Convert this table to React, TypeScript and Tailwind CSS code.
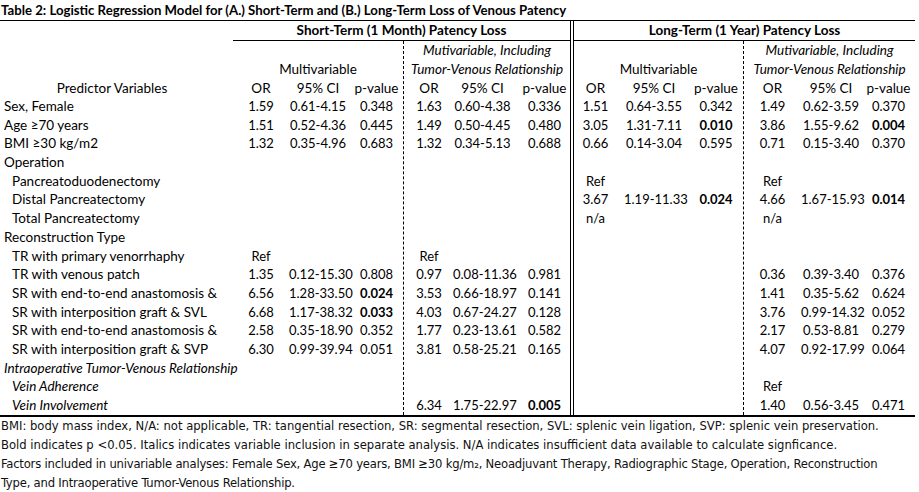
import React from 'react'

type Trio = [string, string, string] | null

interface Row {
  label: string
  level?: 0 | 1
  italic?: boolean
  g1?: Trio
  g2?: Trio
  g3?: Trio
  g4?: Trio
}

// a leading "*" marks a bold p-value
const rows: Row[] = [
  { label: 'Sex, Female', g1: ['1.59', '0.61-4.15', '0.348'], g2: ['1.63', '0.60-4.38', '0.336'], g3: ['1.51', '0.64-3.55', '0.342'], g4: ['1.49', '0.62-3.59', '0.370'] },
  { label: 'Age ≥70 years', g1: ['1.51', '0.52-4.36', '0.445'], g2: ['1.49', '0.50-4.45', '0.480'], g3: ['3.05', '1.31-7.11', '*0.010'], g4: ['3.86', '1.55-9.62', '*0.004'] },
  { label: 'BMI ≥30 kg/m2', g1: ['1.32', '0.35-4.96', '0.683'], g2: ['1.32', '0.34-5.13', '0.688'], g3: ['0.66', '0.14-3.04', '0.595'], g4: ['0.71', '0.15-3.40', '0.370'] },
  { label: 'Operation' },
  { label: 'Pancreatoduodenectomy', level: 1, g3: ['Ref', '', ''], g4: ['Ref', '', ''] },
  { label: 'Distal Pancreatectomy', level: 1, g3: ['3.67', '1.19-11.33', '*0.024'], g4: ['4.66', '1.67-15.93', '*0.014'] },
  { label: 'Total Pancreatectomy', level: 1, g3: ['n/a', '', ''], g4: ['n/a', '', ''] },
  { label: 'Reconstruction Type' },
  { label: 'TR with primary venorrhaphy', level: 1, g1: ['Ref', '', ''], g2: ['Ref', '', ''] },
  { label: 'TR with venous patch', level: 1, g1: ['1.35', '0.12-15.30', '0.808'], g2: ['0.97', '0.08-11.36', '0.981'], g4: ['0.36', '0.39-3.40', '0.376'] },
  { label: 'SR with end-to-end anastomosis &', level: 1, g1: ['6.56', '1.28-33.50', '*0.024'], g2: ['3.53', '0.66-18.97', '0.141'], g4: ['1.41', '0.35-5.62', '0.624'] },
  { label: 'SR with interposition graft & SVL', level: 1, g1: ['6.68', '1.17-38.32', '*0.033'], g2: ['4.03', '0.67-24.27', '0.128'], g4: ['3.76', '0.99-14.32', '0.052'] },
  { label: 'SR with end-to-end anastomosis &', level: 1, g1: ['2.58', '0.35-18.90', '0.352'], g2: ['1.77', '0.23-13.61', '0.582'], g4: ['2.17', '0.53-8.81', '0.279'] },
  { label: 'SR with interposition graft & SVP', level: 1, g1: ['6.30', '0.99-39.94', '0.051'], g2: ['3.81', '0.58-25.21', '0.165'], g4: ['4.07', '0.92-17.99', '0.064'] },
  { label: 'Intraoperative Tumor-Venous Relationship', italic: true },
  { label: 'Vein Adherence', level: 1, italic: true, g4: ['Ref', '', ''] },
  { label: 'Vein Involvement', level: 1, italic: true, g2: ['6.34', '1.75-22.97', '*0.005'], g4: ['1.40', '0.56-3.45', '0.471'] },
]

type Key = 'g1' | 'g2' | 'g3' | 'g4'

// column widths per sub-group: OR, 95% CI, p-value
const widths: Record<Key, [string, string, string]> = {
  g1: ['w-[56px]', 'w-[58px]', 'w-[56px] pl-[3px]'],
  g2: ['w-[49px] pl-[1px]', 'w-[59px]', 'w-[58px] pl-[7px]'],
  g3: ['w-[50px] pr-[7px]', 'w-[60px]', 'w-[59px] pl-[5px]'],
  g4: ['w-[57px]', 'w-[60px]', 'w-[54px] pl-[1px]'],
}

function Value({ text, cls }: { text: string; cls: string }) {
  const bold = text.startsWith('*')
  return (
    <div className={`${cls} shrink-0 text-center whitespace-nowrap ${bold ? 'font-bold' : ''}`}>
      {bold ? text.slice(1) : text}
    </div>
  )
}

function SubGroup({ k, line1, line2, dashed }: { k: Key; line1?: string; line2: string; dashed?: boolean }) {
  const w = widths[k]
  return (
    <div className={`flex flex-col ${dashed ? 'border-l border-dashed border-black' : ''}`}>
      <div className="h-[19px] leading-[19px] text-center italic whitespace-nowrap">{line1 ?? ''}</div>
      <div className={`h-[19px] leading-[19px] text-center whitespace-nowrap ${line1 ? 'italic' : ''}`}>{line2}</div>
      <div className="flex h-[18px] leading-[18px]">
        <Value text="OR" cls={w[0]} />
        <Value text="95% CI" cls={w[1]} />
        <Value text="p-value" cls={w[2]} />
      </div>
      <div className="text-[13px]">
        {rows.map((r, i) => {
          const v = r[k]
          return (
            <div key={i} className="flex h-[18.7px] leading-[18.7px]">
              <Value text={v ? v[0] : ''} cls={w[0]} />
              <Value text={v ? v[1] : ''} cls={w[1]} />
              <Value text={v ? v[2] : ''} cls={w[2]} />
            </div>
          )
        })}
      </div>
    </div>
  )
}

export default function App() {
  return (
    <div className="w-[919px] h-[492px] overflow-hidden bg-white text-black font-['Lato',sans-serif] text-[13.5px]">
      <div className="h-[20px] leading-[20px] pl-[1px] text-[13.2px] font-bold whitespace-nowrap">
        Table 2: Logistic Regression Model for (A.) Short-Term and (B.) Long-Term Loss of Venous Patency
      </div>

      <div className="flex w-[915px] border-t border-b-2 border-black">
        <div className="w-[233px] shrink-0 flex flex-col">
          <div className="h-[58px]" />
          <div className="h-[18px] leading-[18px] text-center pr-[9px]">Predictor Variables</div>
          {rows.map((r, i) => (
            <div
              key={i}
              className={`h-[18.7px] leading-[18.7px] whitespace-nowrap ${r.level ? 'pl-[12px]' : 'pl-[4px]'} ${r.italic ? 'italic' : ''}`}
            >
              {r.label}
            </div>
          ))}
        </div>

        <div className="flex flex-col">
          <div className="h-[20px] leading-[19px] border-b border-black text-center font-bold">
            Short-Term (1 Month) Patency Loss
          </div>
          <div className="flex">
            <SubGroup k="g1" line2="Multivariable" />
            <SubGroup k="g2" line1="Mutivariable, Including" line2="Tumor-Venous Relationship" dashed />
          </div>
        </div>

        <div className="flex flex-col border-l-4 border-double border-black">
          <div className="h-[20px] leading-[19px] border-b border-black text-center font-bold">
            Long-Term (1 Year) Patency Loss
          </div>
          <div className="flex">
            <SubGroup k="g3" line2="Multivariable" />
            <SubGroup k="g4" line1="Mutivariable, Including" line2="Tumor-Venous Relationship" dashed />
          </div>
        </div>
      </div>

      <div className="-mt-[1px] pl-[1px] font-['Liberation_Sans_Narrow','DejaVu_Sans_Condensed',sans-serif] text-[12.9px] leading-[19px] text-[#111]">
        <p className="whitespace-nowrap">
          BMI: body mass index, N/A: not applicable, TR: tangential resection, SR: segmental resection, SVL: splenic vein ligation, SVP: splenic vein preservation.
        </p>
        <p className="whitespace-nowrap">
          Bold indicates p &lt;0.05. Italics indicates variable inclusion in separate analysis. N/A indicates insufficient data available to calculate signficance.
        </p>
        <p className="w-[895px] tracking-[-0.2px]">
          Factors included in univariable analyses: Female Sex, Age ≥70 years, BMI ≥30 kg/m₂, Neoadjuvant Therapy, Radiographic Stage, Operation, Reconstruction Type, and Intraoperative Tumor-Venous Relationship.
        </p>
      </div>
    </div>
  )
}
